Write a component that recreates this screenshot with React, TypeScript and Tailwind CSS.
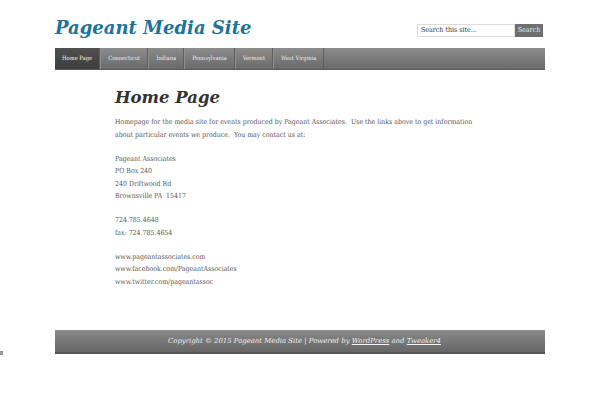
import React from "react";

const serif = { fontFamily: '"DejaVu Serif", "Liberation Serif", serif', fontStretch: "normal" as const };
const cond = { fontFamily: '"DejaVu Serif Condensed", "DejaVu Serif", "Liberation Serif", serif', fontStretch: "condensed" as const };

const navItems = ["Home Page", "Connecticut", "Indiana", "Pennsylvania", "Vermont", "West Virginia"];

export default function App() {
  return (
    <div className="w-[600px] h-[400px] bg-white relative overflow-hidden" style={serif}>
      <div className="w-[490px] ml-[55px]">
        <header className="flex items-start justify-between h-[48px]">
          <h1 className="mt-[17px] text-[18px] leading-[22px] font-bold italic text-[#22729a]">Pageant Media Site</h1>
          <div className="flex mt-[24px] mr-[2px] h-[13px]" style={cond}>
            <div className="w-[98px] h-[13px] border border-[#dcdcdc] bg-white text-[7px] leading-[11px] pl-[3px] text-[#333]">Search this site...</div>
            <div className="w-[28px] h-[13px] bg-[#6f6f6f] text-[7px] leading-[13px] text-center text-[#e8e8e8]">Search</div>
          </div>
        </header>
        <nav className="flex h-[22px] bg-gradient-to-b from-[#8c8c8c] to-[#6a6a6a] border-b border-[#5a5a5a]" style={cond}>
          {navItems.map((n, i) => (
            <div
              key={n}
              className={
                "px-[7px] text-[5.8px] leading-[21px] text-[#eeeeee] border-r border-[#5e5e5e] " +
                (i === 0 ? "bg-gradient-to-b from-[#505050] to-[#3e3e3e]" : "border-l border-l-[#8e8e8e]")
              }
            >
              {n}
            </div>
          ))}
        </nav>
        <main className="ml-[60px] mt-[18px] w-[364px] text-[#555] text-[6.95px] leading-[12.5px]" style={cond}>
          <h2 className="text-[16.5px] leading-[20px] font-bold italic text-[#333] mb-[8px]" style={serif}>Home Page</h2>
          <p className="mb-[11.5px]">
            Homepage for the media site for events produced by Pageant Associates.&nbsp; Use the links above to get information about particular events we produce.&nbsp; You may contact us at:
          </p>
          <p className="mb-[11.5px]">
            Pageant Associates<br />PO Box 240<br />240 Driftwood Rd<br />Brownsville PA&nbsp; 15417
          </p>
          <p className="mb-[11.5px]">
            724.785.4648<br />fax: 724.785.4654
          </p>
          <p>
            www.pageantassociates.com<br />www.facebook.com/PageantAssociates<br />www.twitter.com/pageantassoc
          </p>
        </main>
        <footer className="mt-[42px] h-[24px] pl-[9px] bg-gradient-to-b from-[#8a8a8a] to-[#666] border-b-2 border-[#555] text-center text-[6.9px] leading-[22px] italic text-[#f0f0f0]">
          Copyright © 2015 Pageant Media Site | Powered by <span className="underline">WordPress</span> and <span className="underline">Tweaker4</span>
        </footer>
      </div>
      <div className="absolute left-0 top-[351px] w-[3px] h-[4px] bg-[#9a9a9a]" />
    </div>
  );
}
